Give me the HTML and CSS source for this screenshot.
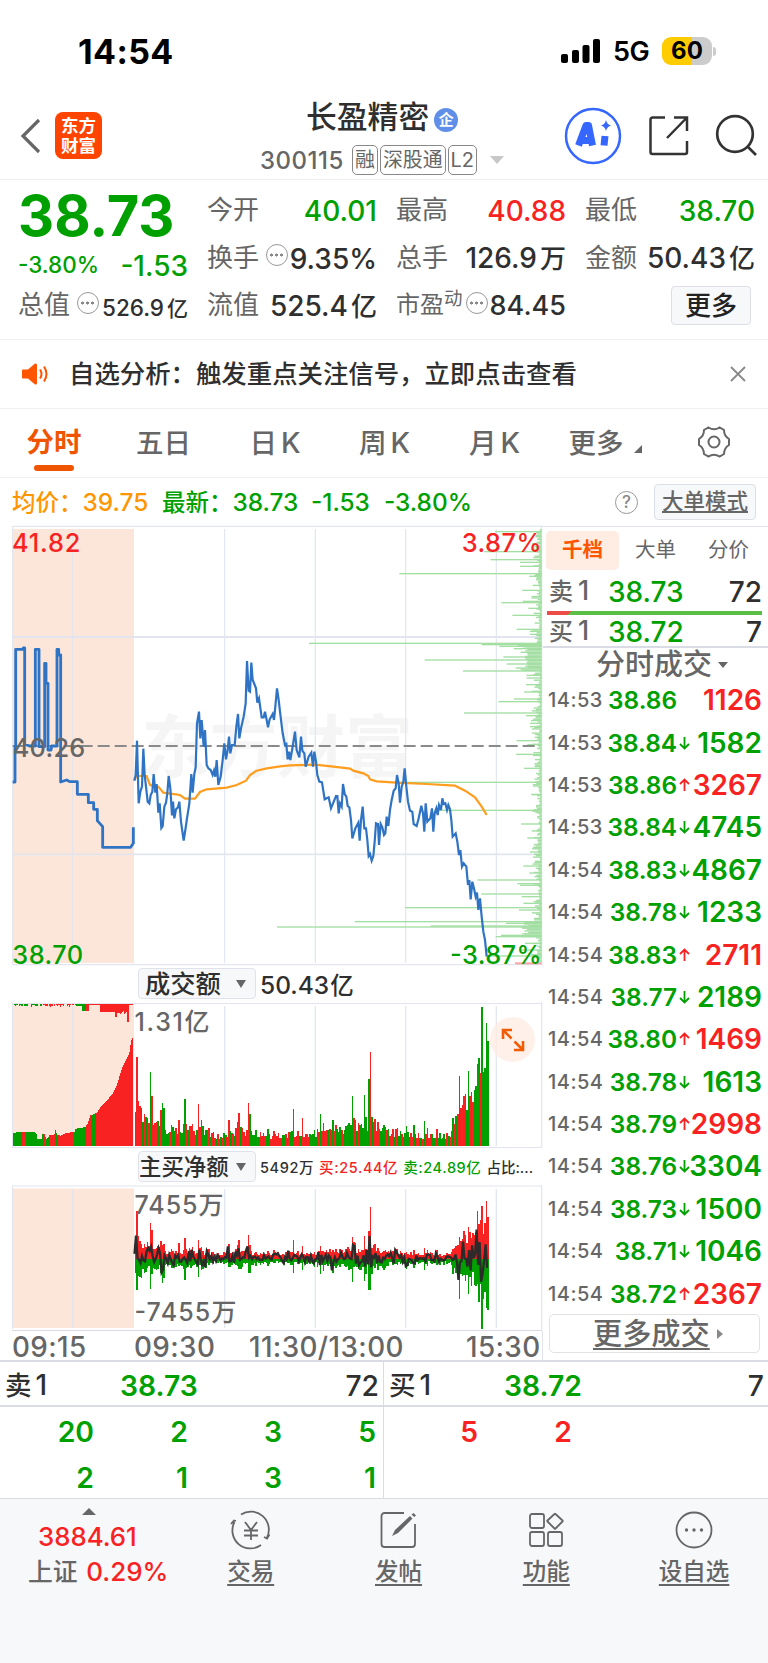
FILE: index.html
```html
<!DOCTYPE html>
<html lang="zh-CN">
<head>
    <meta charset="UTF-8">
    <meta name="viewport" content="width=device-width, initial-scale=1.0">
    <title>长盈精密 300115</title>
    <link rel="stylesheet" href="styles.css">
</head>
<body>

    <div class="status">
        <span class="time">14:54</span>
        <svg class="signal" width="40" height="25" viewBox="0 0 40 25">
            <rect x="0" y="15" width="7" height="9" rx="2"/>
            <rect x="11" y="11" width="7" height="13" rx="2"/>
            <rect x="21.5" y="6" width="7" height="18" rx="2"/>
            <rect x="32" y="0" width="7" height="24" rx="2"/>
        </svg>
        <span class="net">5G</span>
        <span class="battery">60</span>
        <span class="battery-tip"></span>
    </div>

    <div class="header">
        <svg class="back" width="22" height="38" viewBox="0 0 22 38"><path d="M19 3L3 19l16 16"/></svg>
        <div class="logo">东方<br>财富</div>
        <div class="title">
            <div class="name">长盈精密<span class="badge">企</span></div>
            <div class="code"><span class="num">300115</span><span class="tag">融</span><span class="tag">深股通</span><span class="tag">L2</span><span class="caret"></span></div>
        </div>
        <svg class="ai" width="58" height="58" viewBox="0 0 58 58">
            <circle cx="29" cy="29" r="27"/>
            <path class="star" d="M42 13q1 4.500 5 5.500q-4 1-5 5.500q-1-4.500-5-5.500q4-1 5-5.500z"/>
            <path class="letter" d="M14.500 38.500L22 18.500H24.500L28.500 38.500M18 33.500H26M41 29L40 38.500"/>
        </svg>
        <svg class="share" width="42" height="42" viewBox="0 0 42 42"><path d="M17 2.500H4.500a2 2 0 0 0-2 2V37a2 2 0 0 0 2 2H37a2 2 0 0 0 2-2V26M26 2.500H39V16M38 3.500L19 23"/></svg>
        <svg class="search" width="42" height="42" viewBox="0 0 42 42"><circle cx="20" cy="20" r="17.800"/><path d="M32 32l9 9"/></svg>
    </div>

    <div class="quote">
        <div class="col first">
            <div class="price">38.73</div>
            <div class="change"><span class="pct">-3.80%</span><span>-1.53</span></div>
            <div class="row small"><label>总值</label><i class="dots"></i><b>526.9<small>亿</small></b></div>
        </div>
        <div class="col">
            <div class="row"><label>今开</label><b class="green">40.01</b></div>
            <div class="row"><label>换手</label><i class="dots"></i><b>9.35%</b></div>
            <div class="row"><label>流值</label><b>525.4<small>亿</small></b></div>
        </div>
        <div class="col">
            <div class="row"><label>最高</label><b class="red">40.88</b></div>
            <div class="row"><label>总手</label><b>126.9<small>万</small></b></div>
            <div class="row pe"><label>市盈<sup>动</sup></label><i class="dots"></i><b>84.45</b></div>
        </div>
        <div class="col">
            <div class="row"><label>最低</label><b class="green">38.70</b></div>
            <div class="row"><label>金额</label><b>50.43<small>亿</small></b></div>
            <div class="row end"><button class="more">更多</button></div>
        </div>
    </div>

    <div class="notice">
        <svg width="27" height="22" viewBox="0 0 27 22">
            <path class="horn" d="M1 6.500h5L13 .500q2-.500 2 1.500v18q0 2-2 1.500L6 15.500H1q-1 0-1-1v-7q0-1 1-1z"/>
            <path class="wave" d="M18 6.500q3 4.500 0 9M22 3.500q5 7.500 0 15"/>
        </svg>
        <span class="msg">自选分析：触发重点关注信号，立即点击查看</span>
        <svg width="16" height="16" viewBox="0 0 16 16"><path class="cross" d="M1 1l14 14M15 1L1 15"/></svg>
    </div>

    <div class="tabs">
        <span class="active">分时</span>
        <span>五日</span>
        <span>日<em>K</em></span>
        <span>周<em>K</em></span>
        <span>月<em>K</em></span>
        <span>更多<i class="corner"></i></span>
        <svg width="34" height="32" viewBox="0 0 34 32"><path d="M11.500 1.500Q17 5 22.500 1.500L27 4Q27 10 32 13V19Q27 22 27 28L22.500 30.500Q17 27 11.500 30.500L7 28Q7 22 2 19V13Q7 10 7 4Z"/><circle cx="17" cy="16" r="5.500"/></svg>
    </div>

    <div class="info">
        <span class="orange avg">均价：<b>39.75</b></span>
        <span class="green last">最新：<b>38.73</b></span>
        <span class="green diff"><b>-1.53</b></span>
        <span class="green"><b>-3.80%</b></span>
        <i class="help">?</i>
        <button class="mode">大单模式</button>
    </div>

    <div class="main">
        <div class="charts">
            <!-- 分时图，单位为 1/3 像素 -->
            <svg id="price" width="543" height="439" viewBox="0 18 1629 1317">
                <rect class="auction" x="38" y="27" width="364" height="1302"/>
                <text class="mark" x="424" y="756" textLength="815">东方财富</text>
                <path class="grid" d="M38 19H1629M38 1334H1629M38 19V1334M1625 19V1334M218 27V1329M674 27V1329M946 27V1329M1217 27V1329M1489 27V1329"/>
                <path class="grid thick" d="M38 351H1625M38 1003H1625"/>
                <g id="depth"></g>
                <path class="base" d="M38 678H1614"/>
                <path class="avg-line" d="M403 780L410 768L440 768L450 795L475 800L490 818L540 825L555 836L585 836L600 816L620 808L680 803L710 795L738 782L750 765L770 752L800 745L840 739L870 736L945 734L1000 740L1050 746L1060 752L1090 760L1105 768L1110 778L1130 784L1190 788L1280 792L1365 797L1395 812L1425 832L1445 860L1460 885"/>
                <path class="auction-line" d="M38 786H45V680H47V388H68L70 384H74V672L88 678H106V388H117V680H134V430H138V490H144V690H153L155 678H171V388H176V405H182V786L200 780L210 785H232V823H265V848H281V868H292V902L308 920V982H392L400 970V922"/>
                <polyline class="line" points="403,782 407,765 411,662 416,850 421,815 426,800 430,686 434,765 438,800 443,845 448,850 452,825 457,815 461,762 466,818 470,792 475,878 479,850 484,924 488,918 493,860 498,848 502,820 506,768 511,805 516,886 519,845 523,895 528,868 534,862 538,845 543,905 551,962 556,930 561,895 568,850 574,762 578,818 583,762 587,742 591,610 597,575 601,655 605,600 611,680 615,630 620,735 625,745 632,750 638,765 642,752 646,770 650,720 655,795 662,770 668,720 673,670 678,718 683,690 687,650 691,700 696,675 704,675 709,620 714,582 718,655 724,620 731,590 737,550 741,423 746,512 750,515 754,428 758,480 763,492 768,505 772,548 777,535 785,592 791,592 795,575 800,600 804,622 809,598 818,582 822,600 826,560 831,505 836,540 840,575 848,640 855,675 859,672 863,718 867,695 871,720 878,680 885,635 890,690 898,712 903,650 907,692 913,700 917,740 926,710 934,698 939,740 943,695 948,725 952,765 958,785 966,787 974,838 986,832 993,865 1000,848 1008,828 1012,828 1016,880 1020,850 1025,860 1029,792 1034,822 1039,830 1043,858 1048,862 1053,900 1057,955 1066,925 1075,908 1079,962 1083,900 1088,860 1093,925 1098,925 1102,960 1106,1008 1110,1002 1115,1022 1120,1008 1124,965 1128,910 1134,912 1137,975 1142,912 1147,922 1152,945 1156,940 1160,890 1165,918 1170,870 1175,840 1181,812 1187,805 1191,765 1196,790 1200,848 1205,800 1210,785 1214,745 1219,800 1224,845 1230,872 1237,875 1241,912 1250,918 1256,895 1264,857 1269,880 1273,935 1277,850 1282,905 1291,895 1296,865 1300,935 1304,880 1309,865 1313,885 1317,855 1323,870 1327,835 1331,852 1336,850 1341,870 1345,855 1350,868 1354,900 1358,950 1367,940 1372,965 1377,1005 1381,990 1386,1040 1391,1030 1399,1040 1404,1095 1408,1080 1412,1138 1417,1085 1423,1110 1427,1130 1431,1118 1435,1170 1440,1135 1445,1190 1450,1235 1455,1260 1460,1310"/>
                <text class="red" x="36" y="95" textLength="205">41.82</text>
                <text class="red end" x="1625" y="95" textLength="240">3.87%</text>
                <text class="gray" x="38" y="712" textLength="218">40.26</text>
                <text class="green" x="37" y="1331" textLength="212">38.70</text>
                <text class="green end" x="1625" y="1331" textLength="275">-3.87%</text>
            </svg>

            <div class="bar"><span class="select">成交额</span><span class="amount">50.43<small>亿</small></span></div>

            <div class="volume">
                <svg id="volume" width="543" height="146" viewBox="0 1002 543 146">
                    <rect class="auction" x="12.700" y="1003" width="121.300" height="143"/>
                    <path class="grid" d="M12 1003.500H542M12 1147.500H542M12.500 1003V1147M72.700 1006V1146M224.700 1006V1146M315.300 1006V1146M405.700 1006V1146M496.300 1006V1146M541.700 1002V1148"/>
                    <g class="bars"></g>
                    <text class="gray" x="134.500" y="1031" textLength="75">1.31亿</text>
                </svg>
                <span class="expand"><svg width="24" height="24" viewBox="0 0 24 24"><path d="M2 11V2H11M2.500 2.500L10.500 10.500M22 13V22H13M21.500 21.500L13.500 13.500"/></svg></span>
            </div>

            <div class="bar net-bar"><span class="select">主买净额</span><span>5492万</span><span class="red">买:25.44亿</span><span class="green">卖:24.89亿</span><span class="rate">占比:...</span></div>

            <svg id="net" width="543" height="146" viewBox="0 1185 543 146">
                <rect class="auction" x="12.700" y="1188.500" width="121.300" height="139.500"/>
                <path class="grid" d="M12 1186H542M12.500 1186V1329M72.700 1189V1328M224.700 1189V1328M315.300 1189V1328M405.700 1189V1328M496.300 1189V1328M541.700 1185V1331"/>
                <path class="grid thin" d="M12 1330.500H542"/>
                <g class="bars"></g>
                <path class="net-line" d=""/>
                <text class="gray" x="134.500" y="1213.500" textLength="89">7455万</text>
                <text class="gray" x="134.500" y="1320.500" textLength="102">-7455万</text>
            </svg>
            <div class="axis"><span>09:15</span><span>09:30</span><span>11:30/13:00</span><span>15:30</span></div>
        </div>

        <div class="side">
            <div class="side-tabs"><span class="active">千档</span><span>大单</span><span>分价</span></div>
            <div class="level"><label>卖<em>1</em></label><b class="green">38.73</b><b>72</b></div>
            <div class="ratio"></div>
            <div class="level buy"><label>买<em>1</em></label><b class="green">38.72</b><b>7</b></div>
            <div class="deal-title">分时成交<i></i></div>
            <div class="deals" id="deals"></div>
            <div class="deal-more"><u>更多成交</u><i></i></div>
        </div>
    </div>

    <div class="book">
        <div class="half">
            <div class="top"><span>卖<em>1</em></span><b>38.73</b><span>72</span></div>
            <div class="queue green"><span>20</span><span>2</span><span>3</span><span>5</span><span>2</span><span>1</span><span>3</span><span>1</span></div>
        </div>
        <div class="half">
            <div class="top"><span>买<em>1</em></span><b>38.72</b><span>7</span></div>
            <div class="queue red"><span>5</span><span>2</span></div>
        </div>
    </div>

    <div class="nav">
        <div class="index">
            <i class="up"></i>
            <span class="red">3884.61</span>
            <span>上证 <b class="red">0.29%</b></span>
        </div>
        <div class="item">
            <svg width="44" height="40" viewBox="0 0 44 40"><path d="M12 4.500A18 18 0 0 1 38 27.500M40.500 24.500L38 28.500L35 27M32 35A18 18 0 0 1 5.500 12M2 14L5 10.500L7 11M16 12L22 20L28 12M15 20.500H29M15 25.500H29M22 20V30"/></svg>
            <u>交易</u>
        </div>
        <div class="item">
            <svg width="40" height="40" viewBox="0 0 40 40"><path d="M26 3H6.500a3 3 0 0 0-3 3V34a3 3 0 0 0 3 3H34a3 3 0 0 0 3-3V14"/><path class="fill" d="M14 26L17 20L32 6L34.500 8.500L20 23ZM33.500 4.500L35.500 3L38 5.500L36.200 7Z"/></svg>
            <u>发帖</u>
        </div>
        <div class="item">
            <svg width="36" height="40" viewBox="0 0 36 40"><rect x="2" y="4" width="14" height="14" rx="2"/><rect x="2" y="22" width="14" height="14" rx="2"/><rect x="20" y="22" width="14" height="14" rx="2"/><path d="M26.500 4q.500-.500 1 0L34.500 10.500q.500.500 0 1L27.500 18.500q-.500.500-1 0L19.500 11.500q-.500-.500 0-1z"/></svg>
            <u>功能</u>
        </div>
        <div class="item">
            <svg width="40" height="40" viewBox="0 0 40 40"><circle cx="20" cy="20" r="17.500"/><circle class="fill" cx="12.500" cy="20" r="1.700"/><circle class="fill" cx="20" cy="20" r="1.700"/><circle class="fill" cx="27.500" cy="20" r="1.700"/></svg>
            <u>设自选</u>
        </div>
    </div>

    <script src="chart.js"></script>
</body>
</html>
```

FILE: styles.css
```css
* {
    box-sizing: border-box;
}

body {
    margin: 0;
    width: 768px;
    height: 1663px;
    overflow: hidden;
    background-color: #fff;
    color: #2f2f2f;
    font-family: Inter, "Noto Sans CJK SC", sans-serif;
    font-weight: 500;
}

b, em, i {
    font-weight: inherit;
    font-style: normal;
}

button {
    font-family: inherit;
    font-weight: 500;
    padding: 0;
    border: 1px solid #dcdfe6;
    border-radius: 4px;
    background-color: #f7f8fa;
}

svg {
    display: block;
    flex: none;
}

.red { color: #f82222; fill: #f82222; }
.green { color: #00a000; fill: #00a000; }
.gray { color: #666; fill: #666; }
.orange { color: #ff9500; }

/* 状态栏 */
.status {
    display: flex;
    align-items: center;
    height: 102px;
    padding-left: 78px;
    color: #000;
}

.time {
    width: 483px;
    font-size: 34px;
    font-weight: 700;
    letter-spacing: 0.4px;
}

.net {
    width: 49px;
    margin-left: 12px;
    font-size: 27px;
    font-weight: 600;
    letter-spacing: -0.5px;
}

.battery {
    width: 50px;
    height: 28px;
    border-radius: 9px;
    background: linear-gradient(90deg, #fc0 60%, #ccc 60%);
    font-size: 24px;
    line-height: 28px;
    font-weight: 700;
    text-align: center;
}

.battery-tip {
    width: 3px;
    height: 9px;
    margin-left: 1px;
    border-radius: 0 4px 4px 0;
    background-color: #ccc;
}

/* 标题 */
.header {
    display: flex;
    height: 78px;
    border-bottom: 1px solid #eee;
}

.header svg, .tabs svg, .item svg {
    fill: none;
    stroke: #666;
    stroke-width: 2;
}

.header .back {
    margin: 15px 13px 0 20px;
    stroke-width: 3.2;
}

.logo {
    width: 47px;
    height: 47px;
    margin-top: 10px;
    padding-top: 4px;
    border-radius: 8px;
    background-color: #ff4400;
    color: #fff;
    font-size: 17.5px;
    line-height: 19.5px;
    font-weight: 700;
    text-align: center;
}

.title {
    width: 462px;
    padding-left: 158px;
}

.name {
    display: flex;
    align-items: center;
    height: 30px;
    margin-left: 46px;
    font-size: 30.8px;
    line-height: 30px;
}

.badge {
    width: 24px;
    height: 24px;
    margin: 5px 0 0 5px;
    border-radius: 50%;
    background-color: #5f8fe8;
    color: #fff;
    font-size: 15px;
    line-height: 23px;
    font-weight: 700;
    text-align: center;
}

.code {
    display: flex;
    align-items: center;
    height: 56px;
    color: #666;
}

.num {
    width: 92px;
    font-size: 24px;
    letter-spacing: 0.5px;
}

.tag {
    height: 30px;
    margin-right: 2px;
    padding: 0 2px;
    border: 1px solid #888;
    border-radius: 5px;
    font-size: 19.9px;
    line-height: 28px;
    font-weight: 400;
}

.caret {
    margin-left: 11px;
    border: 7px solid transparent;
    border-top: 8px solid #c8c8c8;
    border-bottom: 0;
}

.header .ai {
    margin-top: 5px;
    stroke: #3566ff;
    stroke-width: 2.5;
}

.ai .star {
    fill: #3566ff;
    stroke: none;
}

.ai .letter {
    stroke-width: 7;
    stroke-linejoin: round;
}

.header .share {
    margin: 13px 0 0 26px;
    stroke: #333;
    stroke-width: 2.5;
}

.header .search {
    margin: 12px 0 0 25px;
    stroke: #333;
    stroke-width: 2.7;
}

/* 行情数据 */
.quote {
    display: grid;
    grid-template-columns: repeat(4, 169px);
    column-gap: 20px;
    height: 160px;
    padding: 7px 0 0 19px;
    border-bottom: 1px solid #f0f0f0;
}

.row {
    display: flex;
    align-items: center;
    height: 47.5px;
    font-size: 26px;
    line-height: 36px;
    white-space: nowrap;
}

.row b {
    margin-left: auto;
    padding-top: 1px;
    font-size: 28px;
}

.row small {
    margin-left: 3px;
    font-size: 26px;
}

.row label {
    margin: -1px 0 0 -1px;
    color: #666;
    font-weight: 400;
}

.price {
    height: 58px;
    margin-left: -1px;
    color: #00a000;
    font-size: 56px;
    line-height: 58px;
    font-weight: 700;
}

.change {
    display: flex;
    justify-content: space-between;
    align-items: center;
    height: 37px;
    margin-left: -1px;
    padding-top: 5px;
    color: #00a000;
    font-size: 28px;
}

.change .pct {
    font-size: 22.5px;
    padding-bottom: 4px;
}

.row.small b {
    font-size: 22.5px;
    padding-top: 6px;
}

.small small {
    font-size: 21px;
}

.dots {
    width: 22px;
    height: 22px;
    margin: -6px 0 0 7px;
    padding: 0 2px;
    border: 1.5px solid #999;
    border-radius: 50%;
    background: radial-gradient(circle, #888 1.3px, transparent 1.8px) 0 0 / 5px 100% repeat-x content-box;
}

.pe label {
    display: flex;
    font-size: 24px;
}

.pe sup {
    font-size: 18.5px;
    line-height: 22px;
}

.pe .dots {
    margin-left: 3px;
}

.pe b {
    font-size: 27px;
}

.more {
    width: 80px;
    height: 39px;
    color: #222;
    font-size: 26px;
    line-height: 35px;
}

.row.end {
    padding: 0 0 0 85px;
}

/* 提示 */
.notice {
    display: flex;
    align-items: center;
    height: 69px;
    padding-left: 22px;
    border-bottom: 1px solid #f0f0f0;
}

.msg {
    width: 661px;
    margin: -4px 0 0 20px;
    font-size: 25.4px;
}

.horn { fill: #ff5500; }
.wave { fill: none; stroke: #ff5500; stroke-width: 2; }
.cross { stroke: #888; stroke-width: 1.8; }

/* 周期 */
.tabs {
    display: grid;
    grid-template-columns: 108px 111px 112px 107px 113px 108px 109px;
    justify-items: center;
    align-items: center;
    height: 69px;
    border-bottom: 1px solid #f0f0f0;
    color: #666;
    font-size: 27.5px;
}

.tabs span {
    padding-bottom: 5px;
}

.tabs svg {
    margin-top: -3px;
}

.tabs em {
    margin-left: 4px;
    font-size: 28.5px;
}

.tabs .active {
    height: 69px;
    padding-top: 11px;
    color: #ef5500;
    font-weight: 700;
}

.tabs .active::after {
    content: "";
    display: block;
    width: 40px;
    height: 6px;
    margin: 5px auto 0;
    border-radius: 3px;
    background-color: #ef5500;
}

.corner {
    display: inline-block;
    margin-left: 10px;
    border-left: 8px solid transparent;
    border-bottom: 8px solid #666;
}

.info {
    display: flex;
    align-items: center;
    height: 48px;
    padding-left: 12px;
    font-size: 23.5px;
    line-height: 36px;
}

.info b {
    font-size: 24.4px;
}

.avg { width: 150px; }
.last { width: 149px; }
.diff { width: 73px; }

.help {
    width: 23px;
    height: 23px;
    margin: 0 16px 0 auto;
    border: 1.5px solid #999;
    border-radius: 50%;
    color: #888;
    font-size: 17px;
    line-height: 20px;
    text-align: center;
}

.mode {
    width: 102px;
    height: 36px;
    margin-right: 12px;
    padding-bottom: 3px;
    color: #666;
    font-size: 21.5px;
    line-height: 30px;
    text-decoration: underline;
}

/* 图表 */
.main {
    display: flex;
    height: 834px;
}

.charts {
    width: 543px;
}

.auction { fill: #fce6da; }

.grid {
    fill: none;
    stroke: #e2e5ed;
    stroke-width: 1.2;
}

#price { overflow: visible; }
#price .grid { stroke-width: 3.5; }
#price .thick { stroke-width: 5.5; }
.thin { stroke: #d8dbe3; }

#price text { font-size: 76px; }
#volume text, #net text { font-size: 25px; }

#price .mark {
    fill: #f5f5f6;
    font-size: 204px;
    font-weight: 700;
}

.end { text-anchor: end; }

.base {
    stroke: #8a8a8a;
    stroke-width: 6;
    stroke-dasharray: 36 15;
}

.line, .auction-line, .avg-line, .net-line {
    fill: none;
    stroke: #2f74c4;
    stroke-width: 6.6;
}

.auction-line { stroke-width: 8.5; stroke-linejoin: round; }
.avg-line { stroke: #ff9d1e; }
.net-line { stroke: #2b2b2b; stroke-width: 2.3; }
.ask { fill: #a3dea3; }
.bid { fill: #f9a5a5; }

.bars rect {
    shape-rendering: crispEdges;
}

.bar {
    display: flex;
    align-items: center;
    height: 37px;
    padding-left: 138px;
    font-size: 24.5px;
}

.bar small {
    margin-left: 1px;
    font-size: 23.5px;
}

.select {
    display: flex;
    align-items: center;
    justify-content: space-between;
    width: 118px;
    height: 31px;
    margin-right: 4px;
    padding: 0 9px 0 6px;
    border: 1px solid #dfe2ea;
    border-radius: 4px;
    background-color: #f7f8fa;
    font-size: 25.3px;
    line-height: 28px;
}

.select::after {
    content: "";
    border: 5px solid transparent;
    border-top: 8px solid #666;
    border-bottom: 0;
}

.net-bar {
    gap: 5px;
    font-size: 14.5px;
    letter-spacing: 0.6px;
    white-space: nowrap;
}

.net-bar .select {
    margin-right: -1px;
    padding-left: 0;
    font-size: 22.4px;
    letter-spacing: 0;
}

.rate {
    letter-spacing: 0;
}

.volume {
    display: grid;
}

.volume > * {
    grid-area: 1 / 1;
}

.expand {
    display: flex;
    align-items: center;
    justify-content: center;
    width: 45px;
    height: 45px;
    margin: 15px 0 0 490px;
    border-radius: 50%;
    background-color: rgba(255, 236, 226, 0.75);
}

.expand path {
    fill: none;
    stroke: #f25c05;
    stroke-width: 2.6;
}

.axis {
    display: flex;
    height: 30px;
    padding-left: 12px;
    border-right: 1px solid #e2e5ed;
    color: #666;
    font-size: 27.8px;
    line-height: 32px;
    letter-spacing: 0.4px;
}

.axis span:nth-child(1) { width: 122px; }
.axis span:nth-child(2) { width: 115px; }
.axis span:nth-child(3) { width: 217px; }

/* 右侧盘口 */
.side {
    width: 225px;
    padding-left: 3px;
    border-top: 1px solid #e2e5ed;
}

.side-tabs {
    display: flex;
    padding-top: 4px;
    color: #666;
    font-size: 20.5px;
    line-height: 38px;
    text-align: center;
}

.side-tabs span {
    width: 73px;
    font-weight: 400;
}

.side-tabs .active {
    height: 39px;
    border-radius: 5px;
    background-color: #ffece3;
    color: #ff5500;
    font-weight: 700;
}

.level {
    display: flex;
    align-items: center;
    height: 41px;
    padding: 3px 6px 0 3px;
    font-size: 28px;
    line-height: 30px;
}

.level label {
    width: 59px;
    margin-top: -1px;
    color: #666;
    font-size: 24px;
}

.level em {
    margin-left: 5px;
    font-size: 27px;
}

.level b:last-child {
    margin-left: auto;
}

.level.buy {
    height: 31px;
    padding-top: 2px;
}

.ratio {
    width: 215px;
    height: 4px;
    margin-left: 1px;
    background: linear-gradient(135deg, #ec4d48 17px, #5cbf45 17px);
}

.deal-title {
    display: flex;
    align-items: center;
    height: 33px;
    margin-left: -3px;
    padding: 2px 0 0 53px;
    border-top: 2px solid #d9dce4;
    color: #666;
    font-size: 29px;
    line-height: 30px;
}

.deal-title i {
    margin-left: 6px;
    border: 5px solid transparent;
    border-top: 6px solid #666;
    border-bottom: 0;
}

.deals {
    height: 635px;
}

.deal {
    display: flex;
    align-items: center;
    height: 42.4px;
    padding: 0 6px 0 2px;
    white-space: nowrap;
}

.deal .at {
    width: 56px;
    color: #666;
    font-size: 20px;
    letter-spacing: 0.5px;
}

.deal .deal-price {
    width: 73px;
    font-size: 24.4px;
    font-weight: 600;
    text-align: right;
}

.deal svg {
    margin: 0 0 0 2px;
    fill: none;
    stroke: #00a000;
    stroke-width: 1.8;
}

.deal svg.rise {
    transform: rotate(180deg);
    stroke: #f82222;
}

.deal .vol {
    display: flex;
    flex: 1;
    justify-content: flex-end;
    min-width: 0;
    font-size: 28px;
    font-weight: 600;
}

.deal-more {
    display: flex;
    align-items: center;
    width: 211px;
    height: 39px;
    margin: 0 0 0 3px;
    padding: 0 0 0 43px;
    border: 1px solid #e2e2e2;
    border-radius: 5px;
    color: #666;
    font-size: 29.2px;
    line-height: 34px;
}

.deal-more i {
    margin-left: 7px;
    border: 5px solid transparent;
    border-left: 6px solid #888;
    border-right: 0;
}

/* 买卖队列 */
.book {
    display: flex;
    height: 139px;
    border-top: 2px solid #d9dce4;
    border-bottom: 1px solid #dcdcdc;
    font-size: 28.3px;
    font-weight: 600;
}

.half {
    width: 384px;
}

.half:first-child {
    border-right: 1.5px solid #d9dce4;
}

.half .top {
    display: flex;
    align-items: center;
    height: 45px;
    padding: 4px 4px 0 5px;
    border-bottom: 2px solid #d9dce4;
    font-weight: 500;
    line-height: 34px;
}

.top span:first-child {
    width: 115px;
    margin-top: -2px;
    font-size: 26.5px;
}

.top em {
    margin-left: 4px;
    font-size: 28px;
}

.top b {
    color: #00a000;
    font-weight: 600;
}

.top span:last-child { margin-left: auto; }

.queue {
    display: grid;
    grid-template-columns: repeat(4, 94px);
    grid-auto-rows: 46px;
    padding: 1px 8px 0 0;
    line-height: 48px;
    text-align: right;
}

/* 底部导航 */
.nav {
    display: flex;
    height: 165px;
    background-color: #f7f8fa;
    color: #666;
    font-size: 23.5px;
}

.index, .item {
    display: flex;
    flex-direction: column;
    align-items: center;
    width: 148px;
}

.index {
    width: 177px;
    padding: 9px 0 0 20px;
    align-items: flex-start;
    white-space: nowrap;
}

.index .up {
    margin: 0 0 8px 62px;
    border: 7px solid transparent;
    border-bottom: 7px solid #666;
    border-top: 0;
}

.index > .red {
    margin-left: 18px;
    font-size: 25.8px;
    line-height: 28px;
}

.index > span:last-child {
    margin-left: 8px;
    font-size: 24.8px;
    line-height: 42px;
}

.index b {
    margin-left: 2px;
    font-size: 26px;
}

.item svg {
    margin: 11px 0 3px;
    stroke-width: 1.8;
}

.item .fill {
    fill: #666;
    stroke: none;
}

.item u, .deal-more u {
    text-underline-offset: 4px;
}
```

FILE: chart.js
```js
var SVG = "http://www.w3.org/2000/svg";

function rect(parent, x, y, w, h, cls) {
    var r = document.createElementNS(SVG, "rect");
    r.setAttribute("x", x);
    r.setAttribute("y", y);
    r.setAttribute("width", w);
    r.setAttribute("height", h);
    r.setAttribute("class", cls);
    parent.appendChild(r);
}

var seed = 7;
function rnd() {
    seed = (seed * 16807) % 2147483647;
    return seed / 2147483647;
}

// 折线插值
function at(points, x) {
    for (var i = 1; i < points.length; i++) {
        if (x <= points[i][0]) {
            var a = points[i - 1], b = points[i];
            return a[1] + (b[1] - a[1]) * (x - a[0]) / (b[0] - a[0]);
        }
    }
    return points[points.length - 1][1];
}

// 千档挂单 [y, 左端]
var depth = [[35,675],[95,643],[119,662],[127,750],[139,750],[161,388],[169,778],[211,757],[244,758],[248,694],[265,775],[286,727],[328,740],[343,780],[370,117],[374,635],[379,688],[386,732],[411,700],[420,464],[432,710],[444,737],[453,579],[466,770],[474,770],[494,768],[516,762],[537,732],[545,685],[579,582],[587,768],[620,780],[662,740],[674,772],[703,738],[745,762],[787,385],[824,785],[871,500],[912,753],[933,785],[954,772],[996,780],[1038,760],[1059,778],[1080,622],[1091,742],[1096,750],[1122,634],[1130,755],[1150,760],[1163,405],[1170,747],[1205,254],[1210,708],[1218,482],[1221,21],[1246,693],[1250,677],[1270,765],[1290,755],[1308,660]];
var g = document.getElementById("depth");
for (var y = 27; y < 1325; y += 4.18) {
    var len = 5 + rnd() * rnd() * 32;
    if (y > 370 && y < 450 || y > 1205 && y < 1250) len += 35;
    rect(g, 1625 - len, y, len, 4.2, "ask");
}
depth.forEach(function (d) {
    rect(g, 810 + d[1], d[0] - 2, 815 - d[1], 4, "ask");
});
rect(g, 1545, 1327, 80, 6, "bid");

// 集合竞价
var bars = document.querySelector("#volume .bars");
var shape = [[38,518],[60,514],[100,514],[108,520],[110,536],[124,536],[126,520],[133,520],[137,537],[148,524],[163,522],[165,510],[170,524],[182,526],[190,520],[222,514],[226,505],[255,500],[262,488],[270,465],[290,457],[300,440],[320,420],[340,395],[350,372],[362,330],[376,300],[386,280],[390,255],[394,232]];
var parts = [[66,"green"],[76,"red"],[130,"green"],[136,"red"],[148,"green"],[163,"red"],[170,"green"],[222,"red"],[257,"green"],[272,"red"],[288,"green"],[400,"red"]];
for (var x = 39; x < 398; x += 3) {
    var cls = parts.filter(function (p) { return x < p[0]; })[0][1];
    var h = (557 - at(shape, x)) / 3;
    rect(bars, x / 3, 1146 - h, 1, h, cls);
    var drop = x < 226 ? rnd() * 2.6 : x < 246 ? 2 : x < 267 ? 7 : x < 300 ? 0.8 : x < 343 ? 8 : x < 350 ? 13 : x < 360 ? 9 : x < 380 ? 7 + rnd() * 4 : x < 387 ? 18 : 1;
    rect(bars, x / 3, 1004, 1, drop, x < 130 || x > 226 && x < 257 ? "green" : "red");
}

// 成交额 [x, 高度, 涨跌]
var peaks = [[135,34,0],[136.3,89,1],[138,45,1],[139.4,40,1],[141,38,0],[150,74,0],[151.4,50,1],[160.5,36,1],[162,43,0],[163.4,38,0],[178,26,1],[184.5,47,0],[198,39,1],[199,42,1],[200.7,26,0],[229,26,1],[237,24,1],[238.5,33,1],[247.5,43,1],[249,32,0],[268,17,0],[292.7,37,1],[301.7,28,1],[319.7,32,0],[324,23,0],[331.7,26,0],[336,21,1],[352.7,50,0],[354,28,1],[355.5,26,1],[364.7,51,0],[369.3,67,0],[370.7,94,1],[372.2,29,0],[375,27,1],[377,24,1],[384,21,0],[397.5,18,1],[407,20,0],[414,21,0],[425,25,0],[428,18,0],[437,17,1],[453,28,0],[455,22,1],[459.7,70,0],[461,38,1],[462.5,41,1],[464,50,1],[465.5,52,0],[467,36,0],[468.4,75,0],[470,50,1],[471.4,54,0],[473,44,1],[474.4,56,0],[476,60,0],[477.5,82,1],[479,88,0],[480.4,73,1],[482,139,0],[483.5,74,0],[485,78,0],[486.4,123,0],[488,105,0]];
var level = [[134,38],[147,32],[152,25],[165,20],[200,19],[222,11],[236,17],[252,17],[268,13],[300,13],[330,16],[365,26],[380,18],[400,14],[440,11],[450,13],[460,38],[470,50]];
var net = document.querySelector("#net .bars");
var line = "";
for (var i = 0; i < 235; i++) {
    var bx = 134.5 + i * 1.507;
    var v = at(level, bx) * (0.55 + rnd() * 0.6);
    var up = rnd() > 0.5;
    peaks.forEach(function (p) {
        if (Math.abs(p[0] - bx - 0.5) < 0.76) {
            v = p[1];
            up = p[2] === 1;
        }
    });
    rect(bars, bx, 1146 - v, 1.6, v, up ? "red" : "green");
    var share = (up ? 0.57 : 0.45) + (rnd() - 0.5) * 0.2;
    var buy = v * 0.885 * share, sell = v * 0.885 - buy;
    if (v > 138) { buy = 53; sell = 70; }
    if (v === 123) { buy = 58; sell = 49; }
    rect(net, bx, 1258.5 - buy, 1.6, buy, "red");
    rect(net, bx, 1258.5, 1.6, sell, "green");
    line += (i ? "L" : "M") + bx.toFixed(1) + " " + (1258.5 - (buy - sell) * 1.15 - (rnd() - 0.5) * Math.min(v, 22) * 0.5).toFixed(1);
}
document.querySelector(".net-line").setAttribute("d", line);

// 分时成交：时间、价格、方向、手数、颜色
var deals = [
    ["14:53", "38.86", "", 1126, "red"],
    ["14:53", "38.84", "fall", 1582, "green"],
    ["14:53", "38.86", "rise", 3267, "red"],
    ["14:53", "38.84", "fall", 4745, "green"],
    ["14:54", "38.83", "fall", 4867, "green"],
    ["14:54", "38.78", "fall", 1233, "green"],
    ["14:54", "38.83", "rise", 2711, "red"],
    ["14:54", "38.77", "fall", 2189, "green"],
    ["14:54", "38.80", "rise", 1469, "red"],
    ["14:54", "38.78", "fall", 1613, "green"],
    ["14:54", "38.79", "rise", 2998, "red"],
    ["14:54", "38.76", "fall", 3304, "green"],
    ["14:54", "38.73", "fall", 1500, "green"],
    ["14:54", "38.71", "fall", 1046, "green"],
    ["14:54", "38.72", "rise", 2367, "red"]
];
document.getElementById("deals").innerHTML = deals.map(function (d) {
    var arrow = d[2] ? '<svg class="' + d[2] + '" width="11" height="14" viewBox="0 0 11 14"><path d="M5.500 1V12M1 8L5.500 12.500L10 8"/></svg>' : "";
    return '<div class="deal"><span class="at">' + d[0] + '</span><span class="deal-price green">' + d[1] + '</span>' + arrow + '<span class="vol ' + d[4] + '">' + d[3] + '</span></div>';
}).join("");
```
